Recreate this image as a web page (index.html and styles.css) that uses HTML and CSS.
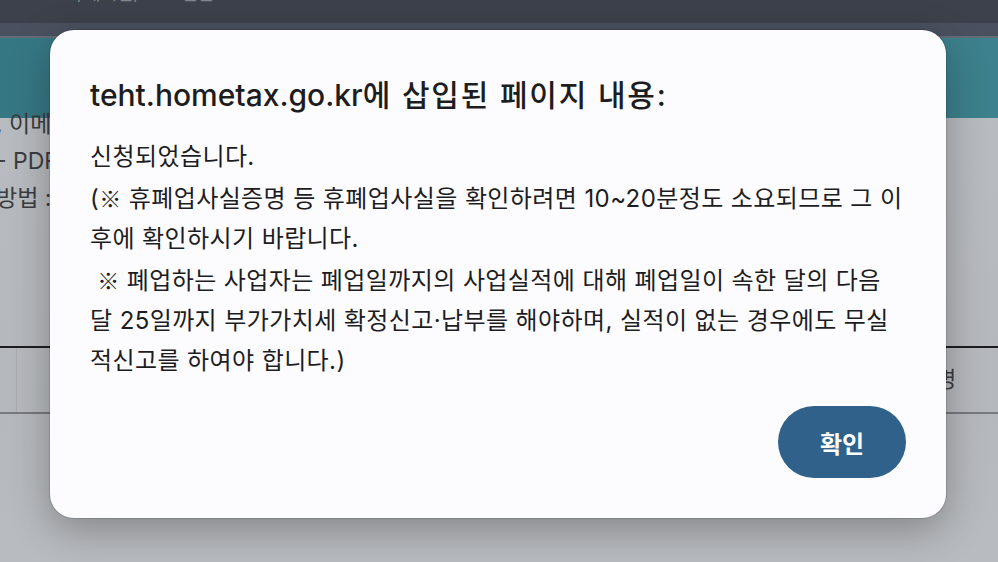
FILE: index.html
```html
<!DOCTYPE html>
<html lang="ko">
    <head>
        <meta charset="UTF-8" />
        <title>teht.hometax.go.kr 알림</title>
        <link rel="stylesheet" href="styles.css">
    </head>

    <body>
        <div class="page">
            <div class="topbar"><span>ㆍ /게시판/ · · ·  일괄  ·  ·  ·  ·  ·  ·  ·  ·</span></div>
            <div class="strip"></div>
            <div class="header"></div>
            <div class="content">
                <p class="bgline first">, 이메</p>
                <p class="bgline">- PDF</p>
                <p class="bgline">방법 :</p>
            </div>
            <div class="table">
                <div class="cell narrow"></div>
                <div class="cell wide"></div>
                <div class="cell last">병</div>
            </div>
        </div>

        <div class="dialog">
            <h1 class="title">teht.hometax.go.kr<span class="ko">에 삽입된 페이지 내용:</span></h1>
            <p class="message">신청되었습니다.<br>(<span class="mark">※</span> 휴폐업사실증명 등 휴폐업사실을 확인하려면 10~20분정도 소요되므로 그 이<br>후에 확인하시기 바랍니다.<br>&nbsp;<span class="mark">※</span> 폐업하는 사업자는 폐업일까지의 사업실적에 대해 폐업일이 속한 달의 다음<br>달 25일까지 부가가치세 확정신고·납부를 해야하며, 실적이 없는 경우에도 무실<br>적신고를 하여야 합니다.)</p>
            <div class="actions">
                <button class="ok">확인</button>
            </div>
        </div>
    </body>
</html>
```

FILE: styles.css
```css
html, body {
    margin: 0px;
    padding: 0px;
    height: 100%;
    overflow: hidden;
}

body {
    font-family: Inter, "Noto Sans CJK KR", sans-serif;
    background: #b9bcc0;
}

.page {
    height: 562px;
    background: linear-gradient(180deg, #b9bcc0 0%, #b5b8bc 70%, #b8bbbf 100%);
}

.topbar {
    height: 23px;
    background: #3c414b;
    overflow: hidden;
    color: #80858e;
    font-size: 18px;
    line-height: 18px;
    padding-left: 56px;
    white-space: pre;
}

.topbar span {
    display: block;
    margin-top: -15px;
}

.strip {
    height: 13px;
    background: #495160;
    border-bottom: 2px solid #666c78;
}

.header {
    height: 80px;
    background: linear-gradient(90deg, #367784 0%, #3b7f8b 40%, #3c818d 100%);
}

.content {
    height: 240px;
    color: #3a3c40;
    font-size: 23px;
    margin-left: -4px;
}

.bgline {
    margin: 0px;
    height: 37px;
    line-height: 37px;
}

.bgline.first {
    margin-top: -12px;
}

.table {
    display: flex;
    height: 64px;
    border-top: 2px solid #1c1d20;
    border-bottom: 2px solid #76797e;
}

.cell {
    border-right: 1px solid #a9acb0;
}

.cell.narrow {
    width: 16px;
}

.cell.wide {
    flex: 1;
}

.cell.last {
    width: 62px;
    border-right: none;
    color: #3a3c40;
    font-size: 22px;
    line-height: 62px;
}

.dialog {
    position: absolute;
    left: 50px;
    top: 30px;
    width: 896px;
    height: 488px;
    box-sizing: border-box;
    padding: 47px 40px 40px 40px;
    background: #fcfcfe;
    border-radius: 24px;
    box-shadow: 0 0 0 1px rgba(0, 0, 0, 0.12), 0 12px 40px rgba(0, 0, 0, 0.28);
    color: #1d1d1f;
    display: flex;
    flex-direction: column;
}

.title {
    margin: 0px;
    font-size: 30px;
    font-weight: 500;
    line-height: 36px;
    white-space: nowrap;
}

.title .ko {
    letter-spacing: 1.8px;
}

.message {
    margin: 24px 0px 0px 0px;
    font-size: 24px;
    letter-spacing: 0.4px;
    line-height: 40px;
    white-space: nowrap;
}

.mark {
    font-family: "Noto Sans CJK KR", sans-serif;
    font-size: 22px;
}

.actions {
    margin-top: auto;
    display: flex;
    justify-content: flex-end;
}

.ok {
    width: 128px;
    height: 72px;
    border: none;
    border-radius: 36px;
    background: #2f618b;
    color: #ffffff;
    font-family: Inter, "Noto Sans CJK KR", sans-serif;
    font-size: 24px;
    font-weight: 700;
}
```
